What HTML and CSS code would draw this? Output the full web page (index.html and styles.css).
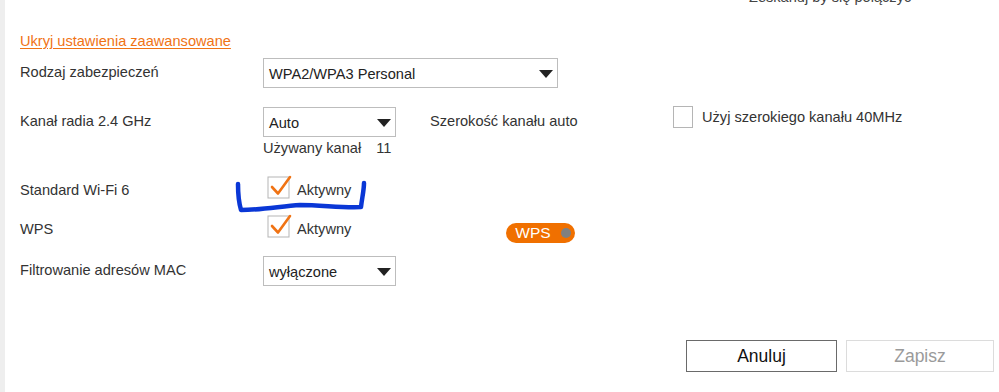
FILE: index.html
```html
<!DOCTYPE html>
<html lang="pl">
<head>
    <meta charset="UTF-8">
    <title>Ustawienia Wi-Fi</title>
    <link rel="stylesheet" href="styles.css">
</head>
<body>
    <div class="page">
        <div class="qr-note">Zeskanuj by się połączyć</div>

        <a class="adv-link" href="#">Ukryj ustawienia zaawansowane</a>

        <div class="row row-security">
            <div class="label">Rodzaj zabezpieczeń</div>
            <div class="dropdown wide">
                <span>WPA2/WPA3 Personal</span>
                <svg class="arrow" width="14" height="8" viewBox="0 0 14 8"><path d="M0 0H14L7 8Z" fill="#222"/></svg>
            </div>
        </div>

        <div class="row row-channel">
            <div class="label">Kanał radia 2.4 GHz</div>
            <div class="channel-col">
                <div class="dropdown narrow">
                    <span>Auto</span>
                    <svg class="arrow" width="14" height="8" viewBox="0 0 14 8"><path d="M0 0H14L7 8Z" fill="#222"/></svg>
                </div>
                <div class="used-channel">Używany kanał <span class="num">11</span></div>
            </div>
            <div class="width-label">Szerokość kanału auto</div>
            <label class="check">
                <span class="box"></span>
                <span class="check-text">Użyj szerokiego kanału 40MHz</span>
            </label>
        </div>

        <div class="row row-check">
            <div class="label">Standard Wi-Fi 6</div>
            <label class="check on">
                <svg class="tick" width="26" height="26" viewBox="0 0 26 26">
                    <rect x="1" y="4" width="21" height="21" fill="#fff" stroke="#b5b5b5"/>
                    <path d="M5 14 L11 20.5 L23 4" fill="none" stroke="#f07314" stroke-width="2.6" stroke-linecap="round" stroke-linejoin="round"/>
                </svg>
                <span class="check-text">Aktywny</span>
            </label>
        </div>

        <div class="row row-check">
            <div class="label">WPS</div>
            <label class="check on">
                <svg class="tick" width="26" height="26" viewBox="0 0 26 26">
                    <rect x="1" y="4" width="21" height="21" fill="#fff" stroke="#b5b5b5"/>
                    <path d="M5 14 L11 20.5 L23 4" fill="none" stroke="#f07314" stroke-width="2.6" stroke-linecap="round" stroke-linejoin="round"/>
                </svg>
                <span class="check-text">Aktywny</span>
            </label>
            <div class="wps-pill">WPS <span class="dot"></span></div>
        </div>

        <div class="row row-mac">
            <div class="label">Filtrowanie adresów MAC</div>
            <div class="dropdown narrow">
                <span>wyłączone</span>
                <svg class="arrow" width="14" height="8" viewBox="0 0 14 8"><path d="M0 0H14L7 8Z" fill="#222"/></svg>
            </div>
        </div>

        <div class="actions">
            <button class="btn cancel">Anuluj</button>
            <button class="btn save" disabled>Zapisz</button>
        </div>

        <!-- odręczne zaznaczenie na zrzucie -->
        <svg class="scribble" width="140" height="40" viewBox="230 175 140 40">
            <path d="M238 184 C238 194 239 203 241 210 C262 210 282 206 300 205 C322 205 342 208 361 207 C362 198 364 190 364 183"
                  fill="none" stroke="#0a37d6" stroke-width="4.5" stroke-linecap="round" stroke-linejoin="round"/>
        </svg>
    </div>
</body>
</html>
```

FILE: styles.css
```css
html, body{
    margin: 0;
    padding: 0;
    background: #fff;
}
body{
    font-family: "Liberation Sans", Arial, sans-serif;
    font-size: 14.6px;
    color: #333;
}
.page{
    position: relative;
    height: 392px;
    overflow: hidden;
    border-left: 5px solid #eeeeee;
    padding-left: 15px;
}

.qr-note{
    margin: -11px 0 0 729px;
    height: 16px;
    line-height: 16px;
    color: #444;
}

.adv-link{
    display: inline-block;
    margin-top: 27px;
    color: #f07314;
    text-decoration: underline;
    text-underline-offset: 2px;
    line-height: 18px;
}

.row{
    display: flex;
    align-items: flex-start;
}
.label{
    width: 243px;
    flex: none;
}

.row-security{
    margin-top: 8px;
}
.row-security .label{
    line-height: 28px;
}

.dropdown{
    box-sizing: border-box;
    height: 30px;
    border: 1px solid #bdbdbd;
    display: flex;
    align-items: center;
    justify-content: space-between;
    padding: 0 4px 0 5px;
    color: #222;
}
.dropdown span{
    padding-top: 2px;
}
.dropdown.wide{
    width: 295px;
}
.dropdown.narrow{
    width: 133px;
}
.arrow{
    margin-top: 1px;
}

.row-channel{
    margin-top: 19px;
}
.row-channel .label{
    line-height: 28px;
}
.used-channel{
    margin-top: 2px;
    line-height: 18px;
    color: #333;
}
.used-channel .num{
    margin-left: 11px;
}
.width-label{
    margin-left: 34px;
    width: 245px;
    line-height: 28px;
}
.row-channel .check{
    margin-top: -1px;
    margin-left: -2px;
}
.box{
    box-sizing: border-box;
    width: 20px;
    height: 22px;
    border: 1px solid #b5b5b5;
    margin-right: 9px;
}

.check{
    display: flex;
    align-items: center;
}

.row-check{
    height: 39px;
}
.row-check .label{
    line-height: 22px;
    padding-top: 2px;
}
.row-check .check{
    margin-left: 4px;
    margin-top: -4px;
}
.tick{
    margin-right: 4px;
}
.row-check .check-text{
    padding-top: 7px;
}

.row-channel + .row-check{
    margin-top: 20px;
}

.wps-pill{
    margin: 7px 0 0 155px;
    height: 20px;
    width: 69px;
    box-sizing: border-box;
    border-radius: 10px;
    background: #f07000;
    color: #fff;
    font-size: 15.5px;
    line-height: 20px;
    padding-left: 9px;
    display: flex;
    align-items: center;
}
.wps-pill .dot{
    width: 10px;
    height: 10px;
    border-radius: 50%;
    background: #808080;
    margin-left: 10px;
}

.row-mac{
    margin-top: 1px;
}
.row-mac .label{
    line-height: 28px;
}

.actions{
    display: flex;
    gap: 9px;
    margin: 54px 0 0 666px;
}
.btn{
    box-sizing: border-box;
    width: 151px;
    height: 32px;
    background: #fff;
    font-family: "Liberation Sans", Arial, sans-serif;
    font-size: 17.5px;
    padding: 0;
}
.btn.cancel{
    border: 1px solid #6a6a6a;
    color: #111;
}
.btn.save{
    width: 148px;
    border: 1px solid #dcdcdc;
    color: #9a9a9a;
}

.scribble{
    position: absolute;
    left: 225px;
    top: 175px;
}
```
